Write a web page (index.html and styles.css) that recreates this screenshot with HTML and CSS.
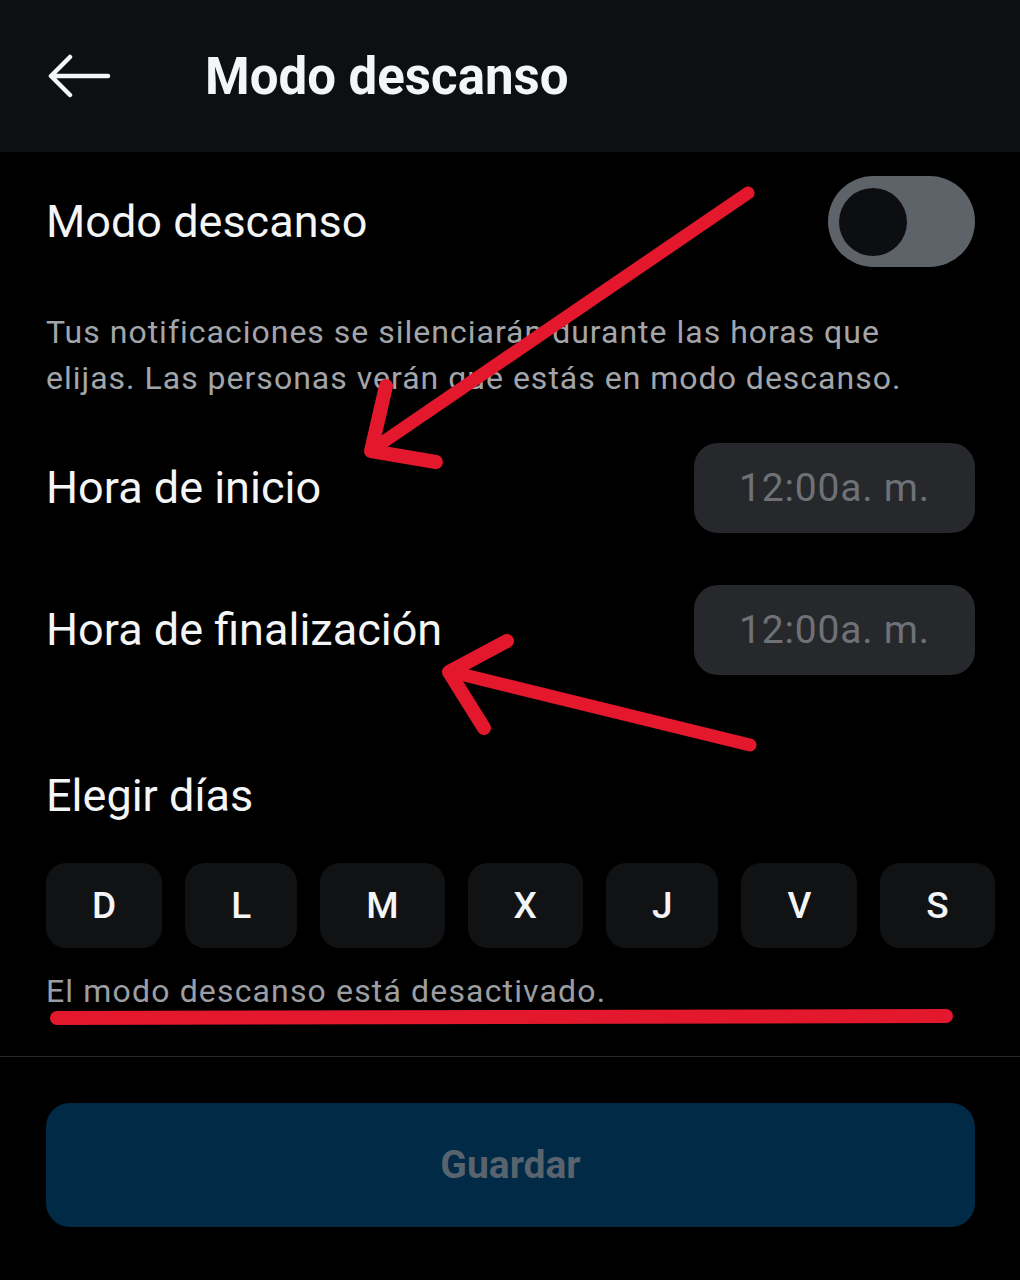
FILE: index.html
```html
<!DOCTYPE html>
<html lang="es">
<head>
<meta charset="utf-8">
<title>Modo descanso</title>
<link rel="stylesheet" href="styles.css">
</head>
<body>
<div class="page">
  <header class="topbar">
    <svg class="back" viewBox="0 0 64 44" width="64" height="44" aria-hidden="true">
      <path d="M61 22H4M23 3L4 22L23 41" fill="none" stroke="#f4f5f6" stroke-width="4.5" stroke-linecap="round" stroke-linejoin="round"/>
    </svg>
    <h1 class="title">Modo descanso</h1>
  </header>

  <main class="content">
    <div class="row row-toggle">
      <span class="label">Modo descanso</span>
      <div class="toggle"><div class="knob"></div></div>
    </div>
    <p class="desc">Tus notificaciones se silenciarán durante las horas que elijas. Las personas verán que estás en modo descanso.</p>

    <div class="row row-time first">
      <span class="label">Hora de inicio</span>
      <div class="pill">12:00a. m.</div>
    </div>
    <div class="row row-time second">
      <span class="label">Hora de finalización</span>
      <div class="pill">12:00a. m.</div>
    </div>

    <h2 class="days-title">Elegir días</h2>
    <div class="days">
      <div class="day">D</div>
      <div class="day">L</div>
      <div class="day">M</div>
      <div class="day">X</div>
      <div class="day">J</div>
      <div class="day">V</div>
      <div class="day">S</div>
    </div>
    <p class="status">El modo descanso está desactivado.</p>
  </main>

  <div class="divider"></div>

  <div class="footer">
    <button class="save" type="button">Guardar</button>
  </div>

  <svg class="marks" viewBox="0 0 1020 1280" width="1020" height="1280" aria-hidden="true">
    <g fill="none" stroke="#e3182d" stroke-linecap="round" stroke-linejoin="round">
      <path d="M748 193L373 449" stroke-width="13"/>
      <path d="M386 386L371 451L436 462" stroke-width="14"/>
      <path d="M750 745L452 672" stroke-width="13"/>
      <path d="M507 641L449 672L484 728" stroke-width="14"/>
      <path d="M57 1018L946 1016" stroke-width="14"/>
    </g>
  </svg>
</div>
</body>
</html>
```

FILE: styles.css
```css
* { box-sizing: border-box; }

html, body {
  margin: 0;
  padding: 0;
  background: #000;
}

body {
  font-family: Roboto, "Noto Sans", "Liberation Sans", sans-serif;
  color: #f4f5f6;
}

.page {
  position: relative;
  width: 1020px;
  height: 1280px;
  overflow: hidden;
  background: #000;
}

.topbar {
  height: 152px;
  background: #0d0f13;
  display: flex;
  align-items: center;
  padding-left: 47px;
}

.back {
  display: block;
  flex: 0 0 auto;
}

.title {
  margin: 0 0 0 94px;
  font-size: 51px;
  font-weight: 700;
  letter-spacing: 0;
  color: #f4f5f6;
  line-height: 1;
}

.content {
  padding: 24px 45px 0 46px;
}

.row {
  display: flex;
  align-items: center;
  justify-content: space-between;
}

.label {
  font-size: 45px;
  font-weight: 400;
  color: #f4f5f6;
  line-height: 52px;
}

.toggle {
  width: 147px;
  height: 91px;
  border-radius: 46px;
  background: #5e636a;
  padding: 11px;
  display: flex;
  align-items: center;
}

.knob {
  width: 68px;
  height: 68px;
  border-radius: 50%;
  background: #0c0e12;
}

.desc {
  margin: 42px 0 0;
  font-size: 32px;
  line-height: 46px;
  color: #a2a5a9;
  letter-spacing: 1px;
}

.row-time.first { margin-top: 42px; }
.row-time.second { margin-top: 52px; }

.pill {
  width: 281px;
  height: 90px;
  border-radius: 24px;
  background: #26282c;
  color: #6e7277;
  font-size: 39px;
  letter-spacing: 0.8px;
  display: flex;
  align-items: center;
  justify-content: center;
}

.days-title {
  margin: 95px 0 0;
  font-size: 45px;
  font-weight: 400;
  line-height: 52px;
  color: #f4f5f6;
}

.days {
  margin-top: 41px;
  margin-right: -70px;
  display: flex;
  gap: 23px;
}

.day {
  flex: 0 0 auto;
  height: 85px;
  padding: 0 46px;
  border-radius: 20px;
  background: #111214;
  color: #f4f5f6;
  font-size: 37px;
  font-weight: 500;
  display: flex;
  align-items: center;
  justify-content: center;
}

.status {
  margin: 20px 0 0;
  font-size: 32px;
  line-height: 46px;
  color: #9b9ea2;
  letter-spacing: 1.15px;
}

.divider {
  margin-top: 42px;
  height: 1px;
  background: #26272a;
}

.footer {
  padding: 46px 45px 0 46px;
}

.save {
  display: block;
  width: 100%;
  height: 124px;
  border: 0;
  border-radius: 24px;
  background: #012a47;
  color: #58636d;
  font-family: Roboto, "Noto Sans", "Liberation Sans", sans-serif;
  font-size: 39px;
  font-weight: 700;
}

.marks {
  position: absolute;
  top: 0;
  left: 0;
  pointer-events: none;
}
```
